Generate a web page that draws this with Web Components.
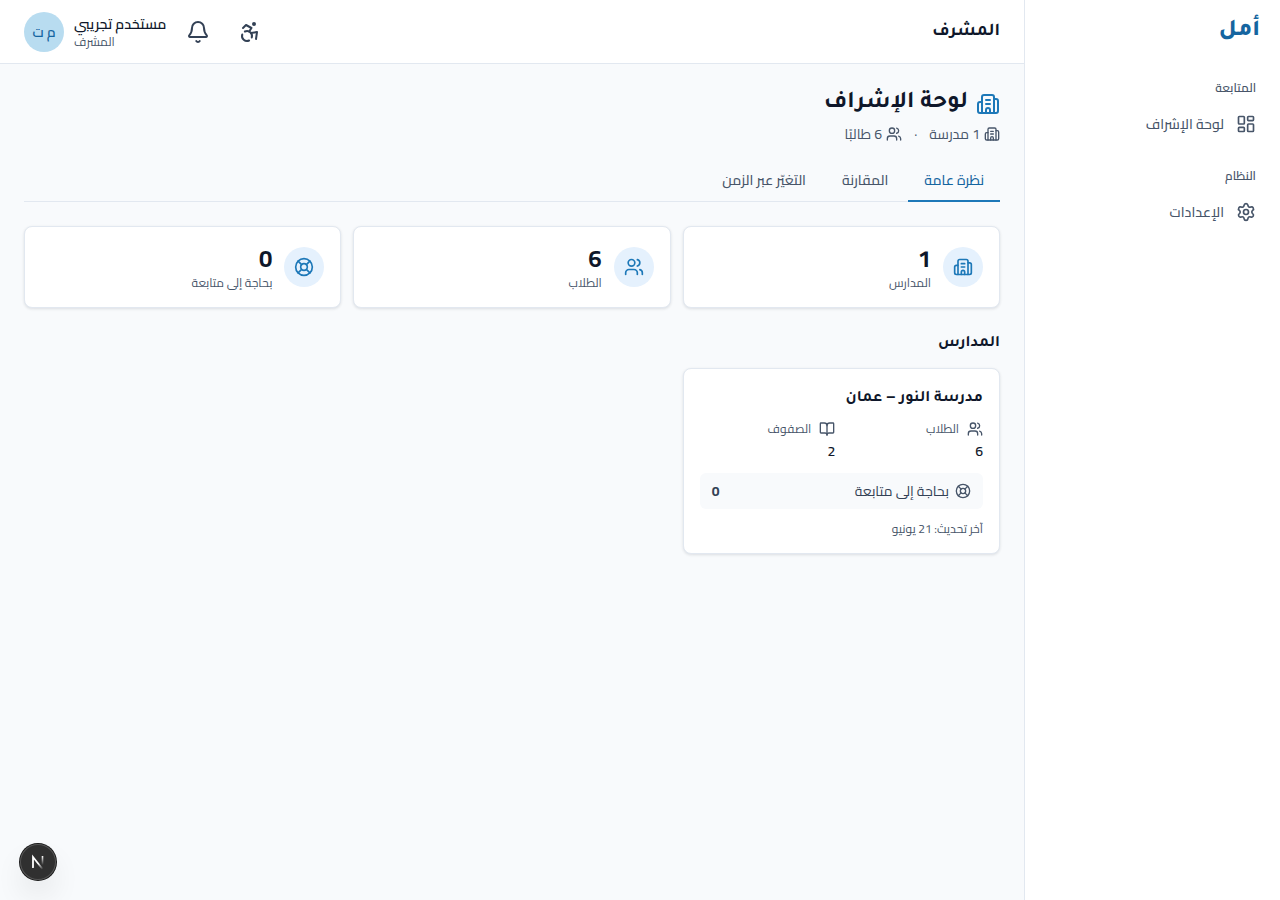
<!DOCTYPE html>
<html lang="ar" dir="rtl">
<head>
<meta charset="utf-8">
<meta name="viewport" content="width=device-width, initial-scale=1">
<title>أمل</title>
<style>
  :root {
    --brand: #1565a0;
    --primary: #1d78b8;
    --primary-soft: #e5f1fd;
    --ink: #0f172a;
    --text: #334155;
    --muted: #475569;
    --border: #e2e8f0;
    --surface: #fff;
    --page: #f8fafc;
    --heading: Tajawal, Cairo, "Noto Sans Arabic", "DejaVu Sans", sans-serif;
  }

  body {
    margin: 0;
    background: var(--page);
    color: var(--ink);
    font-family: Cairo, "Noto Sans Arabic", "Open Sans", "DejaVu Sans", sans-serif;
    font-size: 14px;
    line-height: 20px;
  }
</style>
</head>
<body>
<app-shell></app-shell>

<script>
  // Stroke icons on a 24x24 grid
  const ICONS = {
    building: '<path d="M10 12h4"/><path d="M10 8h4"/><path d="M14 21v-3a2 2 0 0 0-4 0v3"/><path d="M6 10H4a2 2 0 0 0-2 2v7a2 2 0 0 0 2 2h16a2 2 0 0 0 2-2V9a2 2 0 0 0-2-2h-2"/><path d="M6 21V5a2 2 0 0 1 2-2h8a2 2 0 0 1 2 2v16"/>',
    users: '<path d="M16 21v-2a4 4 0 0 0-4-4H6a4 4 0 0 0-4 4v2"/><path d="M16 3.128a4 4 0 0 1 0 7.744"/><path d="M22 21v-2a4 4 0 0 0-3-3.87"/><circle cx="9" cy="7" r="4"/>',
    buoy: '<circle cx="12" cy="12" r="10"/><path d="m4.93 4.93 4.24 4.24"/><path d="m14.83 9.17 4.24-4.24"/><path d="m14.83 14.83 4.24 4.24"/><path d="m9.17 14.83-4.24 4.24"/><circle cx="12" cy="12" r="4"/>',
    book: '<path d="M12 7v14"/><path d="M3 18a1 1 0 0 1-1-1V4a1 1 0 0 1 1-1h5a4 4 0 0 1 4 4 4 4 0 0 1 4-4h5a1 1 0 0 1 1 1v13a1 1 0 0 1-1 1h-6a3 3 0 0 0-3 3 3 3 0 0 0-3-3z"/>',
    dashboard: '<rect width="7" height="9" x="3" y="3" rx="1"/><rect width="7" height="5" x="14" y="3" rx="1"/><rect width="7" height="9" x="14" y="12" rx="1"/><rect width="7" height="5" x="3" y="16" rx="1"/>',
    settings: '<path d="M9.671 4.136a2.34 2.34 0 0 1 4.659 0 2.34 2.34 0 0 0 3.319 1.915 2.34 2.34 0 0 1 2.33 4.033 2.34 2.34 0 0 0 0 3.831 2.34 2.34 0 0 1-2.33 4.033 2.34 2.34 0 0 0-3.319 1.915 2.34 2.34 0 0 1-4.659 0 2.34 2.34 0 0 0-3.32-1.915 2.34 2.34 0 0 1-2.33-4.033 2.34 2.34 0 0 0 0-3.831A2.34 2.34 0 0 1 6.35 6.051a2.34 2.34 0 0 0 3.319-1.915"/><circle cx="12" cy="12" r="3"/>',
    bell: '<path d="M10.268 21a2 2 0 0 0 3.464 0"/><path d="M3.262 15.326A1 1 0 0 0 4 17h16a1 1 0 0 0 .74-1.673C19.41 13.956 18 12.499 18 8A6 6 0 0 0 6 8c0 4.499-1.411 5.956-2.738 7.326"/>',
    accessibility: '<circle cx="16" cy="4" r="1"/><path d="m18 19 1-7-6 1"/><path d="m5 8 3-3 5.5 3-2.36 3.5"/><path d="M4.24 14.5a5 5 0 0 0 6.88 6"/><path d="M13.76 17.5a5 5 0 0 0-6.88-6"/>'
  };

  class UiIcon extends HTMLElement {
    constructor() {
      super();
      this.attachShadow({ mode: 'open' });
    }

    connectedCallback() {
      const size = this.getAttribute('size') || '16';

      this.shadowRoot.innerHTML = `
        <style>
          :host { display: block; flex: none; width: ${size}px; height: ${size}px; }
          svg {
            display: block;
            fill: none;
            stroke: currentColor;
            stroke-width: 2;
            stroke-linecap: round;
            stroke-linejoin: round;
          }
        </style>
        <svg width="${size}" height="${size}" viewBox="0 0 24 24" aria-hidden="true">${ICONS[this.getAttribute('name')] || ''}</svg>
      `;
    }
  }

  class NavGroup extends HTMLElement {
    constructor() {
      super();
      this.attachShadow({ mode: 'open' });
    }

    connectedCallback() {
      this.shadowRoot.innerHTML = `
        <style>
          :host { display: block; }
          h2 {
            margin: 0;
            padding: 0 12px 8px;
            font-size: 12px;
            font-weight: 600;
            line-height: 16px;
            color: var(--muted);
          }
        </style>
        <h2>${this.getAttribute('heading')}</h2>
        <slot></slot>
      `;
    }
  }

  class NavLink extends HTMLElement {
    constructor() {
      super();
      this.attachShadow({ mode: 'open' });
    }

    connectedCallback() {
      this.shadowRoot.innerHTML = `
        <style>
          :host { display: block; }
          a {
            display: flex;
            align-items: center;
            gap: 12px;
            padding: 0 12px;
            height: 40px;
            border-radius: 8px;
            color: var(--muted);
            font-weight: 500;
            text-decoration: none;
          }
          a:hover { background: var(--page); }
        </style>
        <a href="${this.getAttribute('href') || '#'}">
          <ui-icon name="${this.getAttribute('icon')}" size="20"></ui-icon>
          <slot></slot>
        </a>
      `;
    }
  }

  class SideBar extends HTMLElement {
    constructor() {
      super();
      this.attachShadow({ mode: 'open' });
    }

    connectedCallback() {
      this.shadowRoot.innerHTML = `
        <style>
          :host {
            display: block;
            box-sizing: border-box;
            background: var(--surface);
            border-inline-end: 1px solid var(--border);
          }
          .brand {
            display: flex;
            align-items: center;
            height: 64px;
            padding: 0 20px;
            font: 800 24px/32px var(--heading);
            color: var(--brand);
            text-decoration: none;
          }
          nav {
            display: flex;
            flex-direction: column;
            gap: 24px;
            padding: 16px 12px;
          }
        </style>
        <a class="brand" href="#">أمل</a>
        <nav>
          <nav-group heading="المتابعة">
            <nav-link icon="dashboard">لوحة الإشراف</nav-link>
          </nav-group>
          <nav-group heading="النظام">
            <nav-link icon="settings">الإعدادات</nav-link>
          </nav-group>
        </nav>
      `;
    }
  }

  class TopBar extends HTMLElement {
    constructor() {
      super();
      this.attachShadow({ mode: 'open' });
    }

    connectedCallback() {
      this.shadowRoot.innerHTML = `
        <style>
          :host {
            display: flex;
            align-items: center;
            justify-content: space-between;
            box-sizing: border-box;
            height: 64px;
            padding: 0 24px;
            background: var(--surface);
            border-bottom: 1px solid var(--border);
          }
          .title { font: 700 18px/28px var(--heading); }
          .actions, .user { display: flex; align-items: center; }
          .actions { gap: 8px; }
          button {
            display: flex;
            align-items: center;
            justify-content: center;
            width: 44px;
            height: 44px;
            padding: 0;
            border: 0;
            border-radius: 8px;
            background: none;
            color: var(--text);
            font: inherit;
            cursor: pointer;
          }
          button.user {
            width: auto;
            gap: 10px;
            padding-inline-start: 2px;
            color: var(--ink);
          }
          .who { display: flex; flex-direction: column; align-items: flex-end; }
          .name { font-weight: 600; }
          .role { font-size: 12px; line-height: 16px; color: var(--muted); }
          .avatar {
            display: flex;
            align-items: center;
            justify-content: center;
            width: 40px;
            height: 40px;
            border-radius: 50%;
            background: #b8dcf0;
            color: var(--brand);
            font-weight: 600;
          }
        </style>
        <span class="title">المشرف</span>
        <div class="actions">
          <button type="button" aria-label="إمكانية الوصول"><ui-icon name="accessibility" size="24"></ui-icon></button>
          <button type="button" aria-label="الإشعارات"><ui-icon name="bell" size="24"></ui-icon></button>
          <button type="button" class="user">
            <span class="who">
              <span class="name">مستخدم تجريبي</span>
              <span class="role">المشرف</span>
            </span>
            <span class="avatar">م ت</span>
          </button>
        </div>
      `;
    }
  }

  class TabBar extends HTMLElement {
    constructor() {
      super();
      this.attachShadow({ mode: 'open' });
    }

    connectedCallback() {
      const tabs = this.getAttribute('tabs').split('|');

      this.shadowRoot.innerHTML = `
        <style>
          :host { display: flex; gap: 4px; border-bottom: 1px solid var(--border); }
          button {
            margin-bottom: -1px;
            padding: 2px 16px 0;
            height: 44px;
            border: 0;
            border-bottom: 2px solid transparent;
            background: none;
            color: var(--muted);
            font: inherit;
            font-weight: 500;
            cursor: pointer;
          }
          button[aria-selected="true"] {
            border-color: var(--primary);
            color: var(--brand);
          }
        </style>
        ${tabs.map((tab, i) => `<button type="button" role="tab" aria-selected="${i === 0}">${tab}</button>`).join('')}
      `;
      this.setAttribute('role', 'tablist');

      const buttons = this.shadowRoot.querySelectorAll('button');
      buttons.forEach(btn => {
        btn.addEventListener('click', () => {
          buttons.forEach(b => b.setAttribute('aria-selected', String(b === btn)));
        });
      });
    }
  }

  class StatCard extends HTMLElement {
    constructor() {
      super();
      this.attachShadow({ mode: 'open' });
    }

    connectedCallback() {
      this.shadowRoot.innerHTML = `
        <style>
          :host {
            display: flex;
            align-items: center;
            gap: 12px;
            box-sizing: border-box;
            min-height: 82px;
            padding: 16px;
            background: var(--surface);
            border: 1px solid var(--border);
            border-radius: 8px;
            box-shadow: 0 1px 3px rgba(15, 23, 42, 0.12);
          }
          .badge {
            display: flex;
            align-items: center;
            justify-content: center;
            width: 40px;
            height: 40px;
            border-radius: 50%;
            background: var(--primary-soft);
            color: var(--primary);
          }
          .value { font-size: 24px; line-height: 32px; font-weight: 700; }
          .label { font-size: 12px; line-height: 16px; color: var(--muted); }
        </style>
        <div class="badge"><ui-icon name="${this.getAttribute('icon')}" size="20"></ui-icon></div>
        <div>
          <div class="value">${this.getAttribute('value')}</div>
          <div class="label"><slot></slot></div>
        </div>
      `;
    }
  }

  class SchoolCard extends HTMLElement {
    constructor() {
      super();
      this.attachShadow({ mode: 'open' });
    }

    connectedCallback() {
      // The heading font has a very short en dash, so the dash is set in the body font
      const name = this.getAttribute('name').replace('–', '<span class="dash">–</span>');

      this.shadowRoot.innerHTML = `
        <style>
          :host {
            display: flex;
            flex-direction: column;
            gap: 8px;
            box-sizing: border-box;
            padding: 16px;
            background: var(--surface);
            border: 1px solid var(--border);
            border-radius: 8px;
            box-shadow: 0 1px 3px rgba(15, 23, 42, 0.12);
          }
          h3 { margin: 0; padding-top: 2px; font: 700 16px/24px var(--heading); }
          .dash { font-family: Cairo, "Open Sans", sans-serif; line-height: 1; }
          dl {
            display: grid;
            grid-template-columns: 1fr 1fr;
            gap: 12px;
            margin: -2px 0 4px;
          }
          dt {
            display: flex;
            align-items: center;
            gap: 8px;
            height: 24px;
            font-size: 12px;
            color: var(--muted);
          }
          dd { margin: 0; font-weight: 600; }
          .follow {
            display: flex;
            align-items: center;
            gap: 6px;
            padding: 8px 12px;
            border-radius: 6px;
            background: var(--page);
            color: var(--text);
          }
          .follow ui-icon { color: var(--muted); }
          .follow b { margin-inline-start: auto; font-weight: 700; }
          .updated { margin-top: 4px; font-size: 12px; line-height: 16px; color: var(--muted); }
        </style>
        <h3>${name}</h3>
        <dl>
          <div><dt><ui-icon name="users"></ui-icon>الطلاب</dt><dd>${this.getAttribute('students')}</dd></div>
          <div><dt><ui-icon name="book"></ui-icon>الصفوف</dt><dd>${this.getAttribute('classes')}</dd></div>
        </dl>
        <div class="follow">
          <ui-icon name="buoy"></ui-icon>
          <span>بحاجة إلى متابعة</span>
          <b>${this.getAttribute('follow-up')}</b>
        </div>
        <div class="updated">آخر تحديث: ${this.getAttribute('updated')}</div>
      `;
    }
  }

  class DashboardPage extends HTMLElement {
    constructor() {
      super();
      this.attachShadow({ mode: 'open' });
    }

    connectedCallback() {
      this.shadowRoot.innerHTML = `
        <style>
          :host { display: block; padding: 24px; }
          h1 {
            display: flex;
            align-items: center;
            gap: 8px;
            margin: 0;
            font: 700 24px/32px var(--heading);
          }
          h1 ui-icon { color: var(--primary); }
          .meta {
            display: flex;
            align-items: center;
            gap: 12px;
            padding-top: 4px;
            color: var(--muted);
          }
          .meta span { display: flex; align-items: center; gap: 4px; }
          tab-bar { margin: 14px 0 24px; }
          .grid {
            display: grid;
            grid-template-columns: repeat(3, 1fr);
            gap: 12px;
          }
          h2 { margin: 24px 0 12px; font: 700 16px/24px var(--heading); }
        </style>
        <h1><ui-icon name="building" size="24"></ui-icon>لوحة الإشراف</h1>
        <div class="meta">
          <span><ui-icon name="building"></ui-icon>1 مدرسة</span>
          <span>·</span>
          <span><ui-icon name="users"></ui-icon>6 طالبًا</span>
        </div>
        <tab-bar tabs="نظرة عامة|المقارنة|التغيّر عبر الزمن"></tab-bar>
        <div class="grid">
          <stat-card icon="building" value="1">المدارس</stat-card>
          <stat-card icon="users" value="6">الطلاب</stat-card>
          <stat-card icon="buoy" value="0">بحاجة إلى متابعة</stat-card>
        </div>
        <h2>المدارس</h2>
        <div class="grid">
          <school-card name="مدرسة النور – عمان" students="6" classes="2" follow-up="0" updated="21 يونيو"></school-card>
        </div>
      `;
    }
  }

  // Floating round button in the corner of the window
  class DevButton extends HTMLElement {
    constructor() {
      super();
      this.attachShadow({ mode: 'open' });
    }

    connectedCallback() {
      this.shadowRoot.innerHTML = `
        <style>
          :host { display: block; position: fixed; left: 20px; bottom: 20px; }
          button {
            display: block;
            width: 36px;
            height: 36px;
            padding: 0;
            border: 0;
            border-radius: 50%;
            background: #303030;
            box-shadow: 0 0 0 1px #171717, inset 0 0 0 1px #555, 0 16px 32px -8px rgba(0, 0, 0, 0.24);
            cursor: pointer;
          }
          svg { display: block; }
        </style>
        <button type="button" aria-label="Next.js Dev Tools">
          <svg width="36" height="36" viewBox="0 0 36 36" fill="none">
            <defs>
              <linearGradient id="diag" x1="19" y1="19" x2="23" y2="25" gradientUnits="userSpaceOnUse">
                <stop stop-color="#fff"/><stop offset="1" stop-color="#fff" stop-opacity="0"/>
              </linearGradient>
              <linearGradient id="stem" x1="22" y1="12" x2="22" y2="21" gradientUnits="userSpaceOnUse">
                <stop stop-color="#fff"/><stop offset="1" stop-color="#fff" stop-opacity="0"/>
              </linearGradient>
            </defs>
            <path d="M13 24V13L22.500 25" stroke="url(#diag)" stroke-width="1.800"/>
            <path d="M22.500 12V21" stroke="url(#stem)" stroke-width="1.600"/>
          </svg>
        </button>
      `;
    }
  }

  class AppShell extends HTMLElement {
    constructor() {
      super();
      this.attachShadow({ mode: 'open' });
    }

    connectedCallback() {
      this.shadowRoot.innerHTML = `
        <style>
          :host { display: flex; min-height: 100vh; }
          side-bar { flex: 0 0 256px; }
          .content { flex: 1; min-width: 0; }
        </style>
        <side-bar></side-bar>
        <div class="content">
          <top-bar></top-bar>
          <main><dashboard-page></dashboard-page></main>
        </div>
        <dev-button></dev-button>
      `;
    }
  }

  customElements.define('ui-icon', UiIcon);
  customElements.define('nav-group', NavGroup);
  customElements.define('nav-link', NavLink);
  customElements.define('side-bar', SideBar);
  customElements.define('top-bar', TopBar);
  customElements.define('tab-bar', TabBar);
  customElements.define('stat-card', StatCard);
  customElements.define('school-card', SchoolCard);
  customElements.define('dashboard-page', DashboardPage);
  customElements.define('dev-button', DevButton);
  customElements.define('app-shell', AppShell);
</script>
</body>
</html>
